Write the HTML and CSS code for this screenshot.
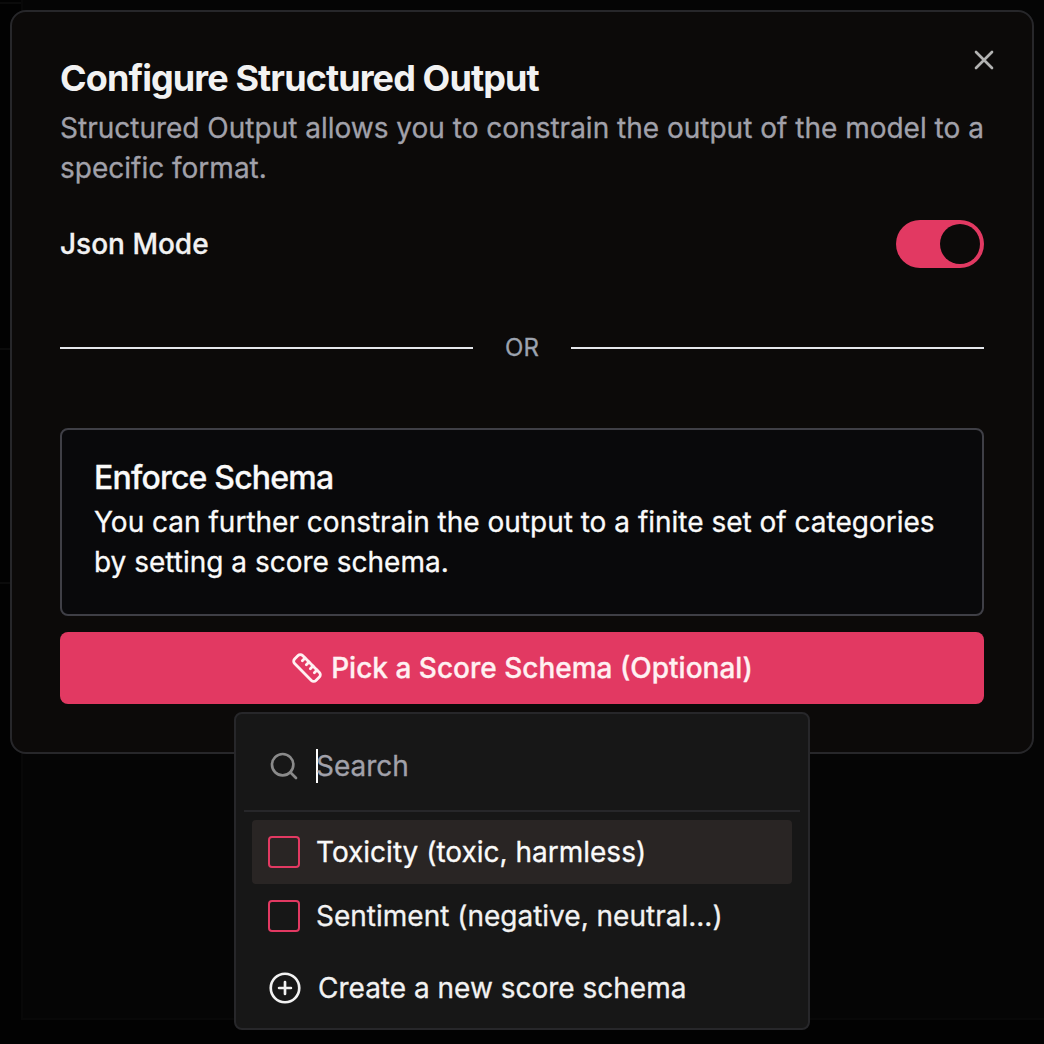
FILE: index.html
```html
<!DOCTYPE html>
<html lang="en">
<head>
<meta charset="utf-8">
<title>Configure Structured Output</title>
<link rel="stylesheet" href="styles.css">
</head>
<body>
<div class="backdrop">
  <div class="rail"><span class="rail-line"></span><span class="rail-line"></span><span class="rail-line lower"></span></div>
  <div class="panel"></div>
</div>
<main class="dialog">
  <button class="close" aria-label="Close">
    <svg width="32" height="32" viewBox="0 0 24 24" fill="none" stroke="currentColor" stroke-width="2" stroke-linecap="round"><path d="M18 6 6 18M6 6l12 12"/></svg>
  </button>
  <header class="header">
    <h1 class="title">Configure Structured Output</h1>
    <p class="desc">Structured Output allows you to constrain the output of the model to a specific format.</p>
  </header>
  <div class="mode">
    <span class="mode-label">Json Mode</span>
    <button class="switch" role="switch" aria-checked="true" aria-label="Json Mode"><span class="thumb"></span></button>
  </div>
  <div class="divider"><span class="rule"></span><span class="or">OR</span><span class="rule"></span></div>
  <section class="card">
    <h2 class="card-title">Enforce Schema</h2>
    <p class="card-text">You can further constrain the output to a finite set of categories by setting a score schema.</p>
  </section>
  <button class="pick">
    <svg width="32" height="32" viewBox="0 0 24 24" fill="none" stroke="currentColor" stroke-width="2.1" stroke-linecap="round" stroke-linejoin="round"><path d="M21.3 15.3a2.4 2.4 0 0 1 0 3.4l-2.6 2.6a2.4 2.4 0 0 1-3.4 0L2.7 8.7a2.41 2.41 0 0 1 0-3.4l2.6-2.6a2.41 2.41 0 0 1 3.4 0Z"/><path d="m14.5 12.5 2-2M11.5 9.5l2-2M8.500 6.500l2-2M17.500 15.500l2-2"/></svg>
    <span class="pick-label">Pick a Score Schema (Optional)</span>
  </button>
</main>
<div class="popover">
  <div class="search">
    <svg width="32" height="32" viewBox="0 0 24 24" fill="none" stroke="currentColor" stroke-width="2" stroke-linecap="round"><circle cx="11" cy="11" r="8"/><path d="m21 21-4.300-4.300"/></svg>
    <span class="caret"></span><span class="placeholder">Search</span>
  </div>
  <div class="list">
    <div class="item active"><span class="box"></span><span class="item-label">Toxicity (toxic, harmless)</span></div>
    <div class="item"><span class="box"></span><span class="item-label">Sentiment (negative, neutral...)</span></div>
  </div>
  <div class="create">
    <svg width="38" height="38" viewBox="0 0 256 256" fill="none" stroke="currentColor" stroke-width="18" stroke-linecap="round"><circle cx="128" cy="128" r="96"/><path d="M88 128h80M128 88v80"/></svg>
    <span class="create-label">Create a new score schema</span>
  </div>
</div>
</body>
</html>
```
FILE: styles.css
```css
* { box-sizing: border-box; }
body {
  margin: 0;
  width: 1044px;
  height: 1044px;
  padding: 10px;
  overflow: hidden;
  position: relative;
  background: #020202;
  color: #f2f2f2;
  font-family: Inter, "Liberation Sans", sans-serif;
  font-size: 28px;
  line-height: 40px;
  -webkit-text-stroke: 0.3px currentColor;
}
h1, h2, p { margin: 0; }
button { border: 0; padding: 0; font: inherit; color: inherit; }
svg { display: block; flex: none; }

.backdrop { position: absolute; inset: 0; display: flex; }
.rail {
  width: 21px;
  display: flex;
  flex-direction: column;
  padding-top: 2px;
  gap: 344px;
}
.rail-line { height: 2px; background: #0b0b0b; }
.lower { margin-top: -112px; }
.panel {
  flex: 1;
  height: 1020px;
  background: #050505;
  border-left: 2px solid #080808;
  border-bottom: 2px solid #080808;
}

.dialog {
  position: relative;
  display: flex;
  flex-direction: column;
  height: 744px;
  padding: 48px;
  border: 2px solid #27272a;
  border-radius: 16px;
  background: #0c0a09;
}
.close {
  position: absolute;
  top: 32px;
  right: 32px;
  background: none;
  color: #b3b3b2;
}
.header { display: flex; flex-direction: column; gap: 12px; }
.title {
  font-size: 36px;
  line-height: 36px;
  font-weight: 700;
  letter-spacing: -0.9px;
  white-space: nowrap;
  -webkit-text-stroke: 0;
}
.desc { color: #a1a1aa; width: 940px; }
.mode {
  display: flex;
  align-items: center;
  justify-content: space-between;
  margin-top: 32px;
}
.mode-label { font-weight: 500; }
.switch {
  display: flex;
  justify-content: flex-end;
  width: 88px;
  height: 48px;
  padding: 4px;
  border-radius: 24px;
  background: #e23962;
}
.thumb { width: 40px; height: 40px; border-radius: 50%; background: #0c0a09; }
.divider {
  display: flex;
  align-items: center;
  gap: 32px;
  height: 160px;
}
.rule { flex: 1; height: 2px; background: #e5e7eb; }
.or { font-size: 24px; line-height: 32px; color: #9ca3af; }
.card {
  height: 188px;
  padding: 32px;
  border: 2px solid #3f3f46;
  border-radius: 8px;
  background: #09090b;
  color: #fafafa;
}
.card-title {
  font-size: 32px;
  line-height: 32px;
  font-weight: 500;
  letter-spacing: -0.8px;
  margin-bottom: 8px;
}
.pick {
  display: flex;
  align-items: center;
  justify-content: center;
  gap: 8px;
  height: 72px;
  margin-top: 16px;
  border-radius: 8px;
  background: #e23962;
  color: #fff1f2;
  font-weight: 500;
}

.popover {
  position: absolute;
  left: 234px;
  top: 712px;
  width: 576px;
  height: 318px;
  padding: 8px;
  border: 2px solid #27272a;
  border-radius: 8px;
  background: #171717;
}
.search {
  display: flex;
  align-items: center;
  height: 90px;
  padding: 0 24px;
  border-bottom: 2px solid #27272a;
}
.search svg { color: #8a8a8a; }
.caret { width: 2px; height: 34px; margin-left: 16px; background: #fff; }
.placeholder { margin-left: -2px; color: #a1a1aa; }
.list { padding: 8px; }
.item {
  display: flex;
  align-items: center;
  gap: 16px;
  height: 64px;
  padding: 0 16px;
  border-radius: 4px;
}
.active { background: #292524; color: #fafafa; }
.box { width: 32px; height: 32px; border: 2px solid #e23962; border-radius: 4px; }
.create {
  display: flex;
  align-items: center;
  gap: 14px;
  height: 64px;
  padding-left: 22px;
}
```
